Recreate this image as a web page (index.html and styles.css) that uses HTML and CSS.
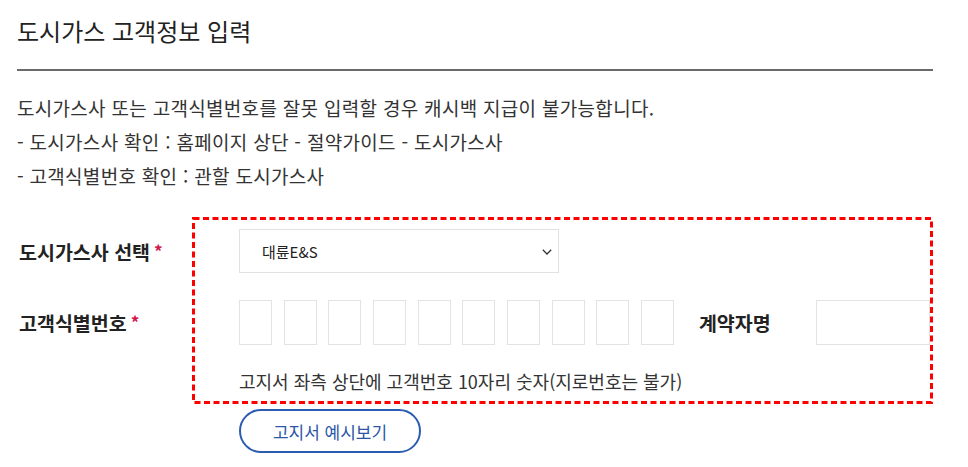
FILE: index.html
```html
<!DOCTYPE html>
<html lang="ko">
<head>
<meta charset="utf-8">
<title>도시가스 고객정보 입력</title>
<link rel="stylesheet" href="styles.css">
</head>
<body>
<div class="page">
  <h2 class="title">도시가스 고객정보 입력</h2>
  <div class="notice">
    <p>도시가스사 또는 고객식별번호를 잘못 입력할 경우 캐시백 지급이 불가능합니다.</p>
    <p>- 도시가스사 확인 : 홈페이지 상단 - 절약가이드 - 도시가스사</p>
    <p>- 고객식별번호 확인 : 관할 도시가스사</p>
  </div>
  <div class="form">
    <div class="row">
      <div class="label">도시가스사 선택<span class="req">*</span></div>
      <div class="select">
        <span>대륜E&amp;S</span>
        <svg class="chev" width="10" height="6" viewBox="0 0 10 6"><polyline points="0.8,0.8 5,5 9.2,0.8" fill="none" stroke="#333" stroke-width="1.3"/></svg>
      </div>
    </div>
    <div class="row row2">
      <div class="label">고객식별번호<span class="req">*</span></div>
      <div class="digits">
        <span class="digit"></span><span class="digit"></span><span class="digit"></span><span class="digit"></span><span class="digit"></span>
        <span class="digit"></span><span class="digit"></span><span class="digit"></span><span class="digit"></span><span class="digit"></span>
      </div>
      <div class="name-label">계약자명</div>
      <span class="name-input"></span>
    </div>
    <p class="hint">고지서 좌측 상단에 고객번호 10자리 숫자(지로번호는 불가)</p>
    <svg class="highlight" width="741" height="187" viewBox="0 0 741 187"><rect x="1.5" y="1.5" width="738" height="184" fill="none" stroke="#ff0000" stroke-width="3" stroke-dasharray="6 3.5"/></svg>
  </div>
  <div class="btn-wrap"><button class="btn">고지서 예시보기</button></div>
</div>
</body>
</html>
```

FILE: styles.css
```css
* { box-sizing: border-box; }
html, body { margin: 0; padding: 0; background: #fff; }
body {
  font-family: "Noto Sans CJK KR", "Noto Sans", sans-serif;
  color: #333;
}
.page {
  width: 933px;
  padding-left: 17px;
}
.title {
  margin: 0;
  padding-top: 13px;
  padding-bottom: 20px;
  font-size: 24px;
  line-height: 36px;
  font-weight: 400;
  color: #222;
  border-bottom: 2px solid #6a6a6a;
}
.notice {
  margin-top: 20px;
}
.notice p {
  margin: 0;
  font-size: 19px;
  line-height: 34px;
  color: #333;
  letter-spacing: 0.3px;
}
.form {
  position: relative;
  margin-top: 36px;
}
.row {
  display: flex;
  align-items: center;
  height: 44px;
}
.row2 {
  margin-top: 27px;
  height: 45px;
}
.label {
  width: 222px;
  padding-left: 2px;
  font-size: 19.5px;
  font-weight: 700;
  color: #222;
}
.req {
  color: #d0174f;
  font-size: 17px;
  font-weight: 700;
  margin-left: 4px;
  position: relative;
  top: -2px;
}
.select {
  width: 320px;
  height: 44px;
  border: 1px solid #e1e1e1;
  display: flex;
  align-items: center;
  justify-content: space-between;
  padding: 0 6px 0 22px;
  font-size: 15px;
  color: #222;
}
.chev { display: block; margin-top: 1px; }
.digits {
  display: flex;
  gap: 11.67px;
}
.digit {
  display: block;
  width: 33px;
  height: 45px;
  border: 1px solid #e3e3e3;
}
.name-label {
  margin-left: 25px;
  width: 72px;
  font-size: 19.5px;
  font-weight: 700;
  color: #222;
  white-space: nowrap;
}
.name-input {
  display: block;
  margin-left: 45px;
  width: 114px;
  height: 45px;
  border: 1px solid #e3e3e3;
}
.hint {
  margin: 24px 0 0 222px;
  font-size: 18px;
  line-height: 24px;
  color: #333;
}
.highlight {
  position: absolute;
  left: 175px;
  top: -12px;
  display: block;
}
.btn-wrap {
  padding-left: 222px;
  margin-top: 16px;
}
.btn {
  display: block;
  width: 182px;
  height: 44px;
  border: 2px solid #2c5cb0;
  border-radius: 22px;
  background: #fff;
  color: #2c56a8;
  font-family: "Noto Sans CJK KR", "Noto Sans", sans-serif;
  font-size: 17px;
  padding: 0;
}
```
